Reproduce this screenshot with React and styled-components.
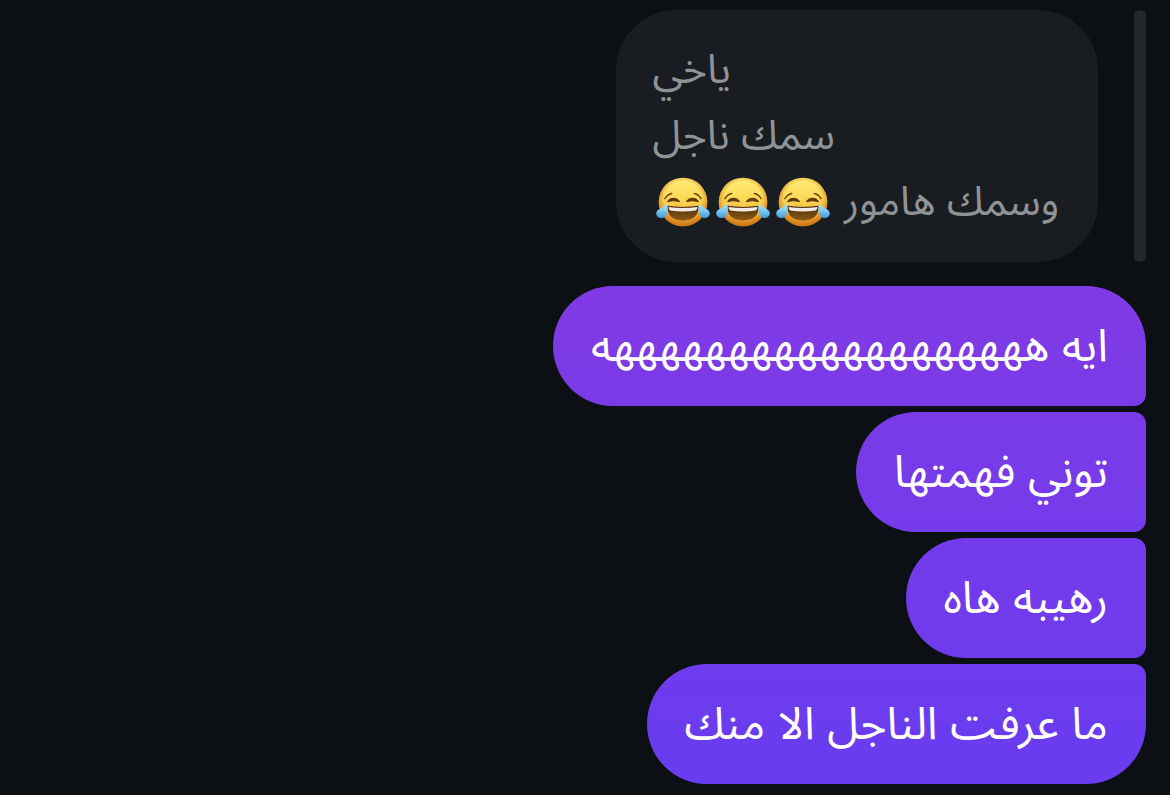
import React from 'react';
import styled, { createGlobalStyle } from 'styled-components';

const GlobalStyle = createGlobalStyle`
  body {
    margin: 0;
    background: #0c0f14;
    font-family: Inter, 'Noto Sans Arabic', 'Noto Sans', sans-serif;
  }
`;

const Thread = styled.main`
  display: flex;
  flex-direction: column;
  align-items: flex-end;
  gap: 24px;
  padding: 10px 24px;
`;

const Reply = styled.div`
  display: flex;
  gap: 36px;
`;

const Quote = styled.blockquote`
  box-sizing: border-box;
  margin: 0;
  padding: 24px 38px 28px 36px;
  border: 1px solid #1c1f23;
  border-radius: 60px;
  background: #191c20;
  color: #909396;
  font-size: 41px;
  line-height: 66px;
`;

const QuoteLine = styled.p`
  margin: 0;
  direction: rtl;
  text-align: left;
`;

const Emoji = styled.svg`
  width: 60px;
  height: 50px;
  vertical-align: -12px;
`;

const ReplyBar = styled.div`
  width: 12px;
  border-radius: 6px;
  background: #24272c;
`;

const Messages = styled.div`
  display: flex;
  flex-direction: column;
  align-items: flex-end;
  gap: 6px;
`;

// the gradient is fixed to the window so it runs on from one bubble to the next
const Bubble = styled.div`
  padding: 22px 38px 24px;
  border-radius: 60px;
  border-top-right-radius: ${({ $first }) => ($first ? '60px' : '12px')};
  border-bottom-right-radius: ${({ $last }) => ($last ? '60px' : '12px')};
  background: linear-gradient(to bottom, #803ae4 36%, #693cf0 98%) fixed;
  color: #fff;
  direction: rtl;
  font-size: 45px;
  line-height: 74px;
`;

const quoted = [
  { text: 'ياخي' },
  { text: 'سمك ناجل' },
  { text: 'وسمك هامور ', laughs: 3 },
];

const messages = [
  'ايه هههههههههههههههههههه',
  'توني فهمتها',
  'رهيبه هاه',
  'ما عرفت الناجل الا منك',
];

const Joy = () => (
  <Emoji viewBox="0 0 60 50" role="img" aria-label="😂">
    <defs>
      <linearGradient id="face" x1="0" y1="0" x2="0" y2="1">
        <stop offset="0" stopColor="#fff07a" />
        <stop offset="0.45" stopColor="#fbd752" />
        <stop offset="0.8" stopColor="#efab36" />
        <stop offset="1" stopColor="#d98520" />
      </linearGradient>
      <radialGradient id="rim" cx="0.5" cy="0.46" r="0.54">
        <stop offset="0.7" stopColor="#d9861c" stopOpacity="0" />
        <stop offset="1" stopColor="#c06c10" stopOpacity="0.75" />
      </radialGradient>
      <linearGradient id="mouth" x1="0" y1="0" x2="0" y2="1">
        <stop offset="0" stopColor="#4a2a0c" />
        <stop offset="1" stopColor="#8a5a16" />
      </linearGradient>
      <linearGradient id="tear" x1="0" y1="0" x2="0" y2="1">
        <stop offset="0" stopColor="#b4e2f8" />
        <stop offset="0.5" stopColor="#7cc8f0" />
        <stop offset="1" stopColor="#3f98d6" />
      </linearGradient>
    </defs>
    <circle cx="30" cy="25" r="24.3" fill="url(#face)" />
    <circle cx="30" cy="25" r="24.3" fill="url(#rim)" />
    <g fill="none" stroke="#70430f" strokeLinecap="round">
      <path d="M12 21.6Q14 17.6 18.6 16.4" strokeWidth="1.5" />
      <path d="M48 21.6Q46 17.6 41.4 16.4" strokeWidth="1.5" />
    </g>
    <path d="M14.4 24.6Q16 21.2 20.4 21.2Q25 21.4 26.8 24.6Q20.6 22.8 14.4 24.6Z" fill="#5d370d" stroke="#5d370d" strokeLinejoin="round" />
    <path d="M45.6 24.6Q44 21.2 39.6 21.2Q35 21.4 33.2 24.6Q39.4 22.8 45.6 24.6Z" fill="#5d370d" stroke="#5d370d" strokeLinejoin="round" />
    <path d="M14.4 28.8Q30 31 45.6 28.8Q46 43.4 30 43.4Q14 43.4 14.4 28.8Z" fill="url(#mouth)" />
    <path d="M15.6 30Q30 31.8 44.4 30Q44.4 32.4 42.8 33.4Q30 35.6 17.2 33.4Q15.6 32.4 15.6 30Z" fill="#eeeae6" />
    <path d="M14 26.4Q16 36 12 39.8C9 42.4 3.2 40.8 3.2 36.2C3.4 31.6 10.6 31 14 26.4Z" fill="url(#tear)" />
    <path d="M46 26.4Q44 36 48 39.8C51 42.4 56.8 40.8 56.8 36.2C56.6 31.6 49.4 31 46 26.4Z" fill="url(#tear)" />
  </Emoji>
);

const App = () => (
  <>
    <GlobalStyle />
    <Thread lang="ar">
      <Reply>
        <Quote>
          {quoted.map(line => (
            <QuoteLine key={line.text}>
              {line.text}
              {Array.from({ length: line.laughs || 0 }, (_, i) => (
                <Joy key={i} />
              ))}
            </QuoteLine>
          ))}
        </Quote>
        <ReplyBar />
      </Reply>
      <Messages>
        {messages.map((message, i) => (
          <Bubble key={message} $first={i === 0} $last={i === messages.length - 1}>
            {message}
          </Bubble>
        ))}
      </Messages>
    </Thread>
  </>
);

export default App;
